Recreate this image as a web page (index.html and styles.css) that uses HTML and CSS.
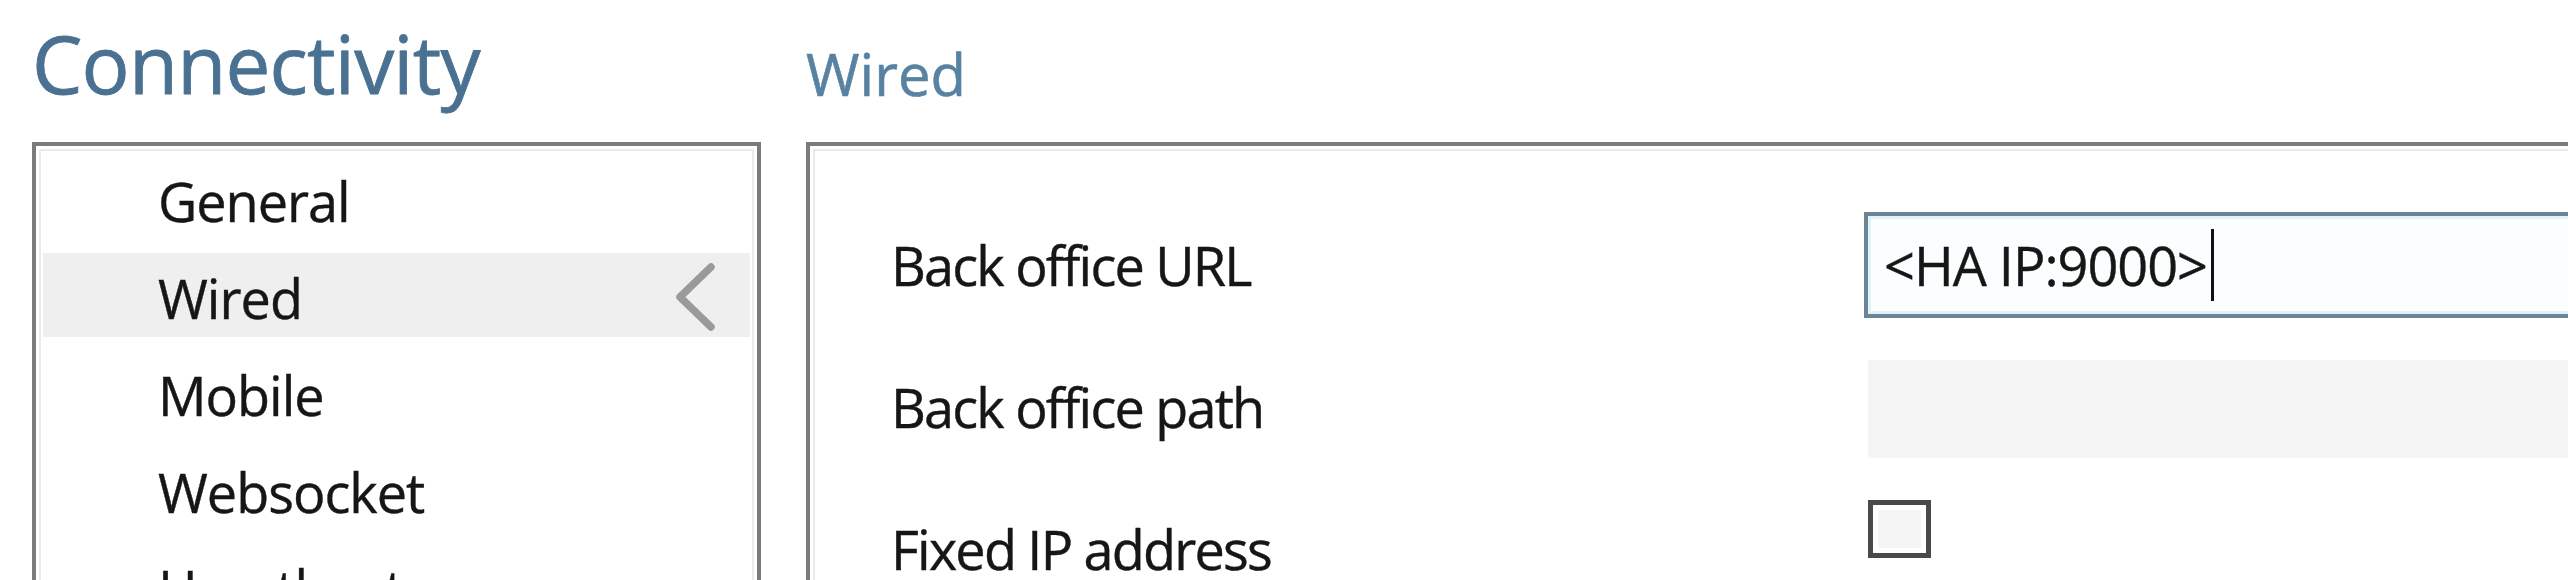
FILE: index.html
```html
<!DOCTYPE html>
<html lang="en">
<head>
<meta charset="utf-8">
<title>Connectivity</title>
<link rel="stylesheet" href="styles.css">
</head>
<body>
<div class="page">
  <aside class="sidebar">
    <h1 class="page-title">Connectivity</h1>
    <nav class="nav-panel">
      <ul class="nav-list">
        <li class="nav-item"><span class="nav-text">General</span></li>
        <li class="nav-item is-selected"><span class="nav-text">Wired</span>
          <svg class="nav-chevron" width="42" height="70" viewBox="0 0 42 70" aria-hidden="true"><polyline points="37,5 6,35 37,65" fill="none" stroke="#9a9a9a" stroke-width="7.5" stroke-linecap="round" stroke-linejoin="round"/></svg>
        </li>
        <li class="nav-item"><span class="nav-text">Mobile</span></li>
        <li class="nav-item"><span class="nav-text">Websocket</span></li>
        <li class="nav-item"><span class="nav-text">Heartbeat</span></li>
      </ul>
    </nav>
  </aside>
  <main class="content">
    <h2 class="section-title">Wired</h2>
    <section class="settings-panel">
      <div class="form-grid">
        <div class="field-label">Back office URL</div>
        <div class="text-input is-focused"><span class="input-value">&lt;HA IP:9000&gt;</span><span class="caret"></span></div>
        <div class="field-label">Back office path</div>
        <div class="text-input is-disabled"></div>
        <div class="field-label">Fixed IP address</div>
        <div class="checkbox-cell"><span class="checkbox"></span></div>
      </div>
    </section>
  </main>
</div>
</body>
</html>
```
FILE: styles.css
```css
html, body {
  margin: 0;
  padding: 0;
  height: 580px;
  overflow: hidden;
  background: #ffffff;
}

body {
  font-family: "Open Sans", "Noto Sans", sans-serif;
  color: #161616;
  -webkit-text-stroke: 0.4px currentColor;
}

.page {
  display: grid;
  grid-template-columns: 729px 1fr;
  column-gap: 45px;
  padding-left: 32px;
}

.page-title {
  box-sizing: border-box;
  height: 142px;
  margin: 0;
  padding-top: 23px;
  font-size: 80px;
  line-height: 80px;
  font-weight: 400;
  color: #4a7191;
  letter-spacing: -0.8px;
  -webkit-text-stroke: 0.8px currentColor;
}

.section-title {
  box-sizing: border-box;
  height: 142px;
  margin: 0;
  padding-top: 45px;
  font-size: 58px;
  line-height: 58px;
  font-weight: 400;
  color: #5882a2;
  -webkit-text-stroke: 0.6px currentColor;
}

.nav-panel {
  box-sizing: border-box;
  height: 600px;
  border: 4px solid #7b7b7b;
  box-shadow: inset 0 0 0 3px #ffffff, inset 0 0 0 5px #ebebeb;
  padding: 10px 7px 0;
}

.nav-list {
  list-style: none;
  margin: 0;
  padding: 0;
  display: flex;
  flex-direction: column;
  row-gap: 13px;
}

.nav-item {
  display: flex;
  align-items: center;
  box-sizing: border-box;
  height: 84px;
  padding-left: 115px;
  padding-right: 34px;
  font-size: 54px;
}

.nav-text {
  padding-top: 6px;
  letter-spacing: -1px;
}

.nav-item.is-selected {
  background: #efefef;
}

.nav-chevron {
  margin-left: auto;
  margin-top: 4px;
}

.settings-panel {
  box-sizing: border-box;
  height: 600px;
  margin-right: -60px;
  border: 4px solid #7b7b7b;
  box-shadow: inset 0 0 0 3px #ffffff, inset 0 0 0 5px #ebebeb;
  padding: 66px 0 0 81px;
}

.form-grid {
  display: grid;
  grid-template-columns: 973px 1fr;
  grid-auto-rows: 106px;
  row-gap: 36px;
}

.field-label {
  font-size: 54px;
  line-height: 106px;
  letter-spacing: -1.8px;
}

.text-input {
  box-sizing: border-box;
  display: flex;
  align-items: center;
  font-size: 54px;
}

.text-input.is-focused {
  border: 4px solid #6c8595;
  box-shadow: inset 0 0 0 3px #e2f3f8;
  background: #fbfefe;
  padding-left: 16px;
}

.input-value {
  letter-spacing: -1px;
}

.caret {
  display: inline-block;
  width: 3px;
  height: 72px;
  margin-left: 4px;
  background: #111111;
}

.text-input.is-disabled {
  margin: 6px 0 2px 4px;
  background: #f5f5f5;
}

.checkbox-cell {
  padding: 4px 0 0 4px;
}

.checkbox {
  display: block;
  box-sizing: border-box;
  width: 63px;
  height: 58px;
  border: 5px solid #4a4a4a;
  background: #f5f5f5;
  box-shadow: inset 0 0 0 5px #ffffff;
}
```
